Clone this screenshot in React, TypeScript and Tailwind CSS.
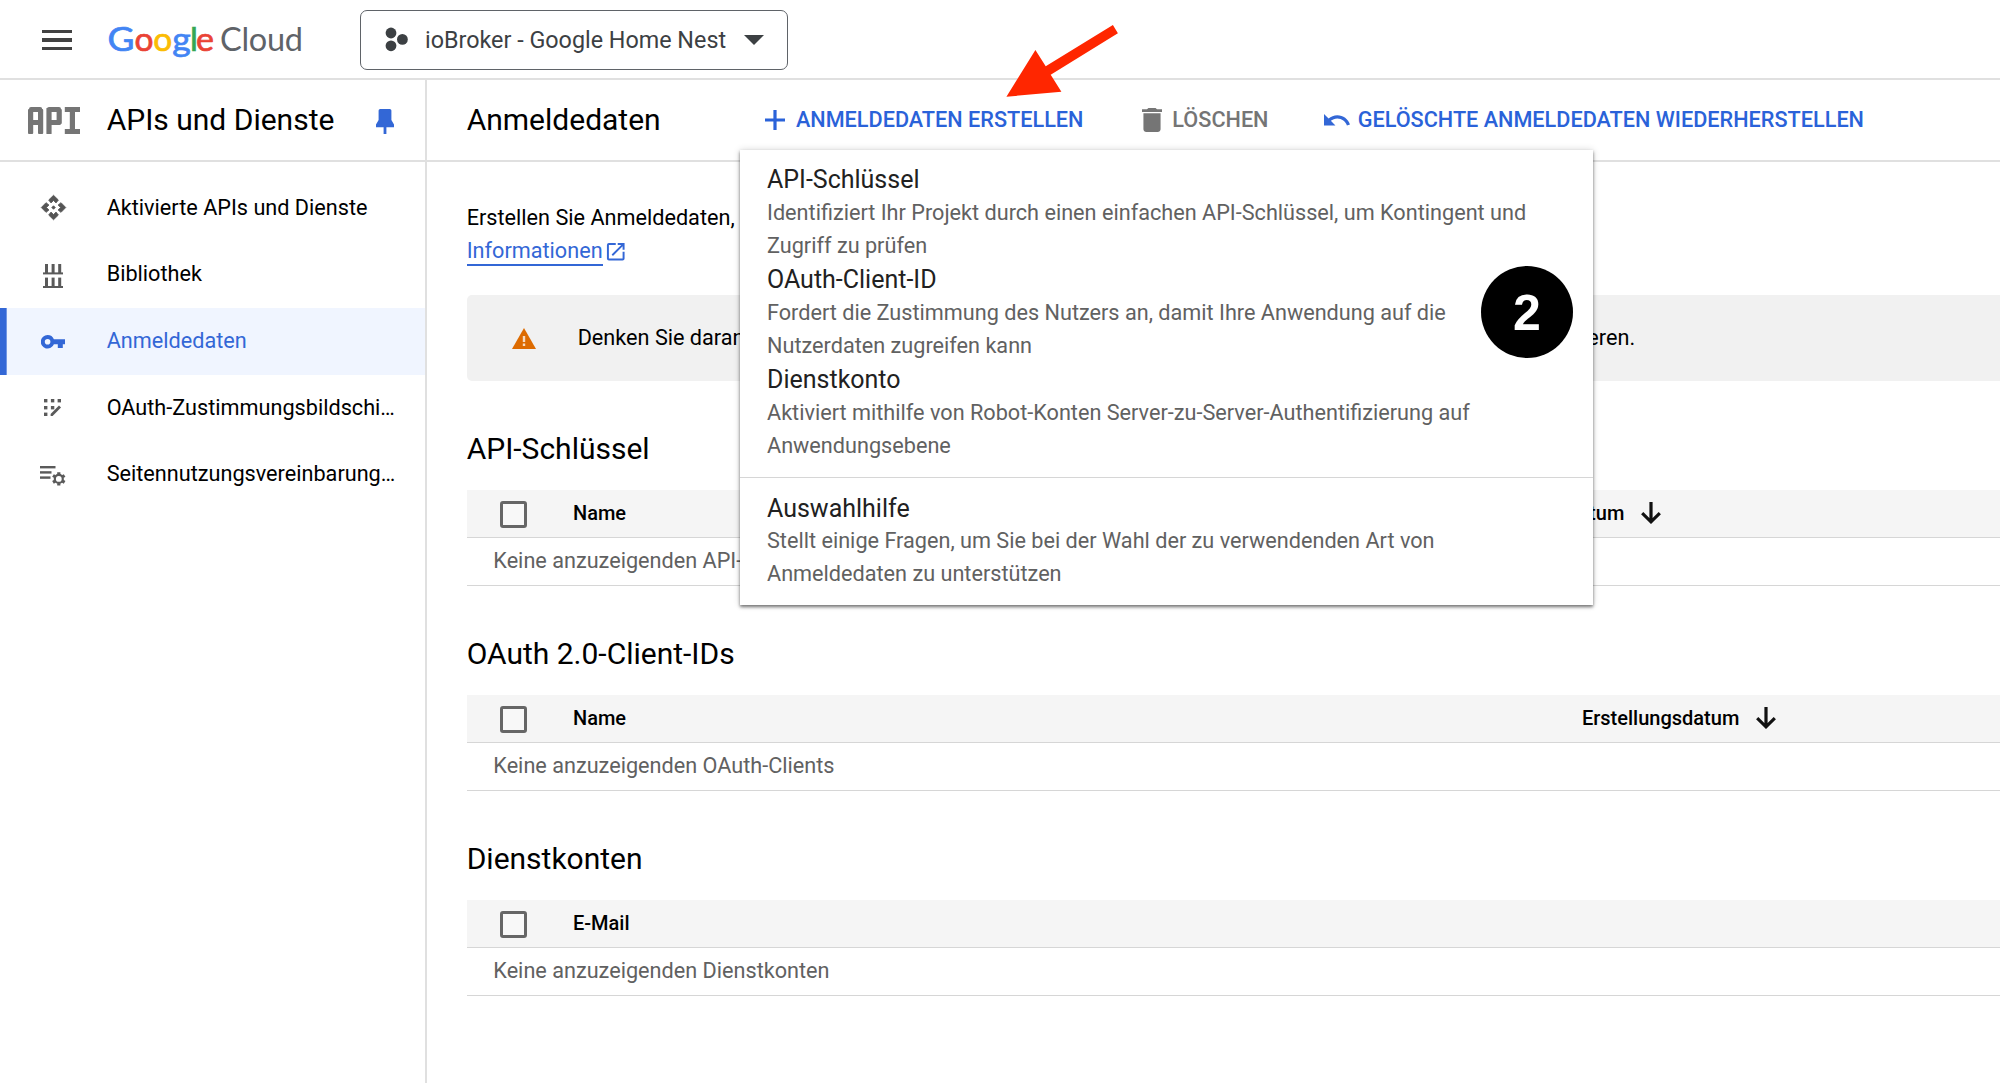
import type { ReactNode } from "react";

function GoogleCloudLogo() {
  return (
    <svg width="200" height="44" viewBox="106 18 200 44" className="mt-[3px] shrink-0" fontFamily="Lato, sans-serif">
      <g fontSize="33.5" strokeWidth="0.7">
        <text x="107.6" y="50.4" fill="#4285f4" stroke="#4285f4" textLength="27" lengthAdjust="spacingAndGlyphs">G</text>
        <text x="134.4" y="50.4" fill="#ea4335" stroke="#ea4335">o</text>
        <text x="153.2" y="50.4" fill="#fbbc04" stroke="#fbbc04">o</text>
        <text x="172.3" y="50.4" fill="#4285f4" stroke="#4285f4" textLength="18.5" lengthAdjust="spacingAndGlyphs">g</text>
        <text x="190" y="50.4" fill="#34a853" stroke="#34a853">l</text>
        <text x="196" y="50.4" fill="#ea4335" stroke="#ea4335" textLength="18" lengthAdjust="spacingAndGlyphs">e</text>
      </g>
      <text x="220" y="50.4" fontSize="32.5" fill="#5f6368" textLength="83" lengthAdjust="spacing">
        Cloud
      </text>
    </svg>
  );
}

function ProjectIcon() {
  return (
    <svg width="24" height="26" viewBox="385 26 24 26" fill="#3c4043" className="shrink-0">
      <circle cx="391" cy="32" r="5.4" />
      <circle cx="402.4" cy="38.4" r="5.4" />
      <circle cx="391" cy="44.8" r="5.4" />
    </svg>
  );
}

function ApiProductIcon() {
  return (
    <svg width="52" height="27" viewBox="0 0 52 27" fill="#757575" className="shrink-0">
      <rect x="0" y="2" width="5.2" height="25" rx="1" />
      <rect x="10" y="2" width="5.2" height="25" rx="1" />
      <rect x="1" y="0" width="13.2" height="5" rx="2" />
      <rect x="2" y="13" width="11" height="5" />
      <rect x="18.4" y="1" width="5.2" height="26" rx="0.6" />
      <rect x="28.6" y="2" width="5.2" height="15" rx="1" />
      <rect x="19" y="0" width="14" height="5" rx="2" />
      <rect x="20" y="13" width="13" height="5" rx="1.5" />
      <rect x="36.8" y="0" width="15.2" height="5" />
      <rect x="41.8" y="2" width="5.2" height="23" />
      <rect x="36.8" y="22" width="15.2" height="5" />
    </svg>
  );
}

function PinIcon() {
  return (
    <svg width="18" height="25" viewBox="0 0 18 25" fill="#3367d6" className="mt-0.5 shrink-0">
      <path d="M4.2 0h9.6a1.6 1.6 0 0 1 1.6 1.6V11L18 15.5V18.2H10.4V25h-2.8v-6.8H0V15.5L2.6 11V1.6A1.6 1.6 0 0 1 4.2 0z" />
    </svg>
  );
}

function ApisIcon() {
  return (
    <svg width="31" height="31" viewBox="0 0 24 24" fill="#555555" stroke="#555555" strokeWidth="0.7" strokeLinejoin="round">
      <path d="M13.5 12L12 13.5 10.5 12l1.5-1.5 1.5 1.5zm-1.5-6l2.12 2.12 2-2.5L12 1.6 7.88 5.62l2 2.5L12 6zm-6 6l2.12-2.12-2.5-2L1.6 12l4.02 4.12 2.5-2L6 12zm12 0l-2.12 2.12 2.5 2L22.4 12l-4.02-4.12-2.5 2L18 12zm-6 6l-2.12-2.12-2 2.5L12 22.4l4.12-4.02-2-2.5L12 18z" transform="translate(1.1 1.1) scale(.91)" />
    </svg>
  );
}

function LibraryIcon() {
  return (
    <svg width="20" height="24" viewBox="0 0 20 24" fill="#5a5a5a" className="mt-0.5">
      <rect x="2" y="0" width="3" height="9" />
      <rect x="8.6" y="0" width="3" height="9" />
      <rect x="15.2" y="0" width="3" height="9" />
      <rect x="0" y="8.4" width="20" height="2" />
      <rect x="2" y="13.6" width="3" height="9" />
      <rect x="8.6" y="13.6" width="3" height="9" />
      <rect x="15.2" y="13.6" width="3" height="9" />
      <rect x="0" y="22" width="20" height="2" />
    </svg>
  );
}

function KeyIcon() {
  return (
    <svg width="24" height="14" viewBox="0 0 24 14" fill="#3367d6" className="mt-px">
      <path fillRule="evenodd" d="M6.6 0a6.8 6.8 0 0 1 6.3 4.3H24v5h-2.2V13h-5V9.3h-3.9A6.8 6.8 0 1 1 6.6 0zM6.6 4a2.8 2.8 0 1 0 0 5.6 2.8 2.8 0 0 0 0-5.6z" />
    </svg>
  );
}

function ConsentIcon() {
  return (
    <svg width="18" height="18" viewBox="0 0 18 18" fill="#5a5a5a">
      <rect x="0" y="0" width="3.4" height="3.4" />
      <rect x="6.9" y="0" width="3.4" height="3.4" />
      <rect x="13.6" y="0" width="3.4" height="3.4" />
      <rect x="0" y="7" width="3.4" height="3.4" />
      <rect x="6.9" y="7" width="3.4" height="3.4" />
      <rect x="0" y="13.6" width="3.4" height="3.4" />
      <path d="M15 6.6l2 2-8.4 8.4h-2v-2z" />
    </svg>
  );
}

function AgreementsIcon() {
  return (
    <svg width="26" height="20" viewBox="0 0 26 20" fill="#5a5a5a" className="mt-0.5">
      <rect x="0" y="0" width="15.5" height="2.4" />
      <rect x="0" y="5.2" width="11.5" height="2.4" />
      <rect x="0" y="10.4" width="10.5" height="2.4" />
      <circle cx="18.8" cy="12.9" r="4" fill="none" stroke="#5a5a5a" strokeWidth="2.2" />
      <g stroke="#5a5a5a" strokeWidth="3.2">
        <path d="M18.8 6.2v2.4M18.8 17.2v2.4M13 9.5l2 1.2M22.6 15.1l2 1.2M13 16.3l2-1.2M22.6 10.7l2-1.2" />
      </g>
    </svg>
  );
}

const navItems: { label: string; icon: ReactNode; active?: boolean }[] = [
  { label: "Aktivierte APIs und Dienste", icon: <ApisIcon /> },
  { label: "Bibliothek", icon: <LibraryIcon /> },
  { label: "Anmeldedaten", icon: <KeyIcon />, active: true },
  { label: "OAuth-Zustimmungsbildschi…", icon: <ConsentIcon /> },
  { label: "Seitennutzungsvereinbarung…", icon: <AgreementsIcon /> },
];

function Sidebar() {
  return (
    <aside className="flex w-[427px] shrink-0 flex-col border-r-2 border-[#e0e0e0]">
      <div className="flex h-[82px] items-center border-b-2 border-[#e0e0e0] pl-7">
        <ApiProductIcon />
        <h2 className="ml-[26.67px] w-[269.33px] text-[30px] leading-10">APIs und Dienste</h2>
        <PinIcon />
      </div>
      <nav className="pt-[12.67px]">
        {navItems.map((item) => (
          <a
            key={item.label}
            className={
              item.active
                ? "flex h-[66.67px] items-center bg-[#f0f5ff] text-[#3367d6] shadow-[inset_6.67px_0_0_#3367d6]"
                : "flex h-[66.67px] items-center"
            }
          >
            <span className="flex w-[106.67px] justify-center">{item.icon}</span>
            <span className="text-[21.667px] whitespace-nowrap">{item.label}</span>
          </a>
        ))}
      </nav>
    </aside>
  );
}

function SortArrow() {
  return (
    <svg width="20" height="22" viewBox="0 0 20 22" fill="none" stroke="#111" strokeWidth="3.2" className="ml-[17px] shrink-0">
      <path d="M10 0v19.4M1.2 11.2l8.8 8.6 8.8-8.6" />
    </svg>
  );
}

function Section({ title, column, date, empty }: { title: string; column: string; date?: "near" | "far"; empty: string }) {
  return (
    <section className="flex h-[205px] shrink-0 flex-col">
      <h3 className="h-[61px] text-[30px] leading-[40px]">{title}</h3>
      <div className="flex h-12 items-center border-b border-[#d6d6d6] bg-[#f5f5f5] pb-0.5 text-[20px] font-medium">
        <span className="mt-1 ml-[33.3px] size-[27px] rounded-[3px] border-[3px] border-[#666666] bg-[#f8f8f8]" />
        <span className={date === "near" ? "ml-[46px] w-[894px]" : "ml-[46px] w-[1009px]"}>{column}</span>
        {date && (
          <span className="flex items-center">
            Erstellungsdatum
            <SortArrow />
          </span>
        )}
      </div>
      <div className="flex h-[48px] items-center border-b border-[#d6d6d6] pb-px pl-[26.67px] text-[21.667px] text-[#616161]">
        {empty}
      </div>
    </section>
  );
}

function MenuEntry({ title, lines }: { title: string; lines: [string, string] }) {
  return (
    <div className="h-[100px] px-[27px] leading-[33.33px] whitespace-nowrap">
      <p className="h-[32.33px] pt-px text-[25px] leading-[32.33px] text-[#212121]">{title}</p>
      <p className="text-[21.667px] text-[#616161]">{lines[0]}</p>
      <p className="text-[21.667px] text-[#616161]">{lines[1]}</p>
    </div>
  );
}

function CreateMenu() {
  return (
    <div className="absolute top-[150px] left-[740px] h-[455px] w-[853.3px] bg-white shadow-[0_2px_3px_rgba(0,0,0,0.5),0_0_7px_rgba(0,0,0,0.16)]">
      <div className="border-b border-[#d6d6d6] py-[13.33px]">
        <MenuEntry
          title="API-Schlüssel"
          lines={["Identifiziert Ihr Projekt durch einen einfachen API-Schlüssel, um Kontingent und", "Zugriff zu prüfen"]}
        />
        <MenuEntry
          title="OAuth-Client-ID"
          lines={["Fordert die Zustimmung des Nutzers an, damit Ihre Anwendung auf die", "Nutzerdaten zugreifen kann"]}
        />
        <MenuEntry
          title="Dienstkonto"
          lines={["Aktiviert mithilfe von Robot-Konten Server-zu-Server-Authentifizierung auf", "Anwendungsebene"]}
        />
      </div>
      <div className="pt-[14px]">
        <MenuEntry
          title="Auswahlhilfe"
          lines={["Stellt einige Fragen, um Sie bei der Wahl der zu verwendenden Art von", "Anmeldedaten zu unterstützen"]}
        />
      </div>
    </div>
  );
}

export default function App() {
  return (
    <div className="relative flex h-[1083px] w-[2000px] flex-col overflow-hidden bg-white font-['Roboto',sans-serif] text-black">
      <header className="flex h-20 shrink-0 items-center border-b-2 border-[#e0e0e0] pl-[41.5px]">
        <div className="mt-0.5 flex w-[30px] flex-col gap-[5px]">
          <span className="h-[3.4px] bg-[#424242]" />
          <span className="h-[3.4px] bg-[#424242]" />
          <span className="h-[3.4px] bg-[#424242]" />
        </div>
        <div className="ml-[34.5px]">
          <GoogleCloudLogo />
        </div>
        <button className="mt-0.5 ml-[54px] flex h-[60px] w-[428px] items-center rounded-[7px] border-[1.5px] border-[#5f6368] pl-6 text-[23.333px] text-[#3c4043]">
          <ProjectIcon />
          <span className="ml-4 w-[318.5px] text-left whitespace-nowrap">ioBroker - Google Home Nest</span>
          <svg width="20" height="10" viewBox="0 0 20 10" fill="#3c4043">
            <path d="M0 0h20L10 10z" />
          </svg>
        </button>
      </header>

      <div className="flex min-h-0 flex-1">
        <Sidebar />
        <main className="flex min-w-0 flex-1 flex-col">
          <div className="flex h-[82px] shrink-0 items-center border-b-2 border-[#e0e0e0] pl-[39.67px] text-[21.667px] font-medium whitespace-nowrap text-[#2a62d9]">
            <h1 className="w-[298px] text-[30px] leading-10 font-normal text-black">Anmeldedaten</h1>
            <button className="flex w-[377px] items-center">
              <svg width="20" height="20" viewBox="0 0 20 20" fill="#2a62d9">
                <path d="M8.4 0h3.2v8.4H20v3.2h-8.4V20H8.4v-8.4H0V8.4h8.4z" />
              </svg>
              <span className="ml-[11.3px]">ANMELDEDATEN ERSTELLEN</span>
            </button>
            <button className="flex w-[182px] items-center text-[#757575]">
              <svg width="20" height="24" viewBox="5 3 14 18" preserveAspectRatio="none" fill="#757575">
                <path d="M6 19c0 1.1.9 2 2 2h8c1.1 0 2-.9 2-2V7H6v12zM19 4h-3.5l-1-1h-5l-1 1H5v2h14V4z" />
              </svg>
              <span className="ml-[10.7px]">LÖSCHEN</span>
            </button>
            <button className="flex items-center">
              <svg width="26" height="11.5" viewBox="2 7 20.5 9" fill="#3367d6">
                <path d="M12.5 8c-2.65 0-5.05.99-6.9 2.6L2 7v9h9l-3.62-3.62c1.39-1.16 3.16-1.88 5.12-1.88 3.54 0 6.55 2.31 7.6 5.5l2.37-.78C21.08 11.03 17.15 8 12.5 8z" />
              </svg>
              <span className="ml-2">GELÖSCHTE ANMELDEDATEN WIEDERHERSTELLEN</span>
            </button>
          </div>

          <div className="flex flex-col pl-[39.67px]">
            <div className="mt-[39px] h-[94px] text-[21.667px] leading-[33.33px]">
              <p>Erstellen Sie Anmeldedaten,</p>
              <p className="flex text-[#3367d6]">
                <a className="h-[31.5px] border-b-2 border-[#3367d6]">Informationen</a>
                <svg width="23.5" height="23.5" viewBox="0 0 24 24" fill="#3367d6" className="mt-[5.5px] ml-px">
                  <path d="M19 19H5V5h7V3H5a2 2 0 0 0-2 2v14a2 2 0 0 0 2 2h14c1.1 0 2-.9 2-2v-7h-2v7zM14 3v2h3.59l-9.83 9.83 1.41 1.41L19 6.41V10h2V3h-7z" />
                </svg>
              </p>
            </div>
            <div className="flex h-[86px] items-center rounded-l-[5px] bg-[#f1f1f1] pl-[45px] text-[21.667px]">
              <svg width="24" height="21" viewBox="0 0 24 21" className="shrink-0">
                <path d="M12 0l12 21H0z" fill="#dd6b00" />
                <path d="M10.8 8h2.4v6h-2.4zM10.8 15.6h2.4V18h-2.4z" fill="#f6dcc4" />
              </svg>
              <p className="ml-[42px] flex w-[1057.5px] justify-between whitespace-nowrap">
                <span>Denken Sie daran, den OAuth-Zustimmungsbildschirm mit Informationen zu Ihrer Anwendung zu</span>
                <span>konfigurieren.</span>
              </p>
            </div>
            <div className="mt-[48px]">
              <Section title="API-Schlüssel" column="Name" date="near" empty="Keine anzuzeigenden API-Schlüssel" />
              <Section title="OAuth 2.0-Client-IDs" column="Name" date="far" empty="Keine anzuzeigenden OAuth-Clients" />
              <Section title="Dienstkonten" column="E-Mail" empty="Keine anzuzeigenden Dienstkonten" />
            </div>
          </div>
        </main>
      </div>

      <CreateMenu />

      <svg width="114" height="74" viewBox="1005 24 114 74" className="absolute top-[24px] left-[1005px]" fill="#ff2600">
        <polygon points="1006.4,96.7 1035.4,50 1045.7,66.3 1112.9,25 1117.9,33.3 1050.7,74.7 1061.4,91.7" />
      </svg>
      <div className="absolute top-[266px] left-[1481px] flex size-[92px] items-center justify-center rounded-full bg-black pt-0.5 font-['Liberation_Sans',sans-serif] text-[50px] leading-none font-bold text-white">
        2
      </div>
    </div>
  );
}
